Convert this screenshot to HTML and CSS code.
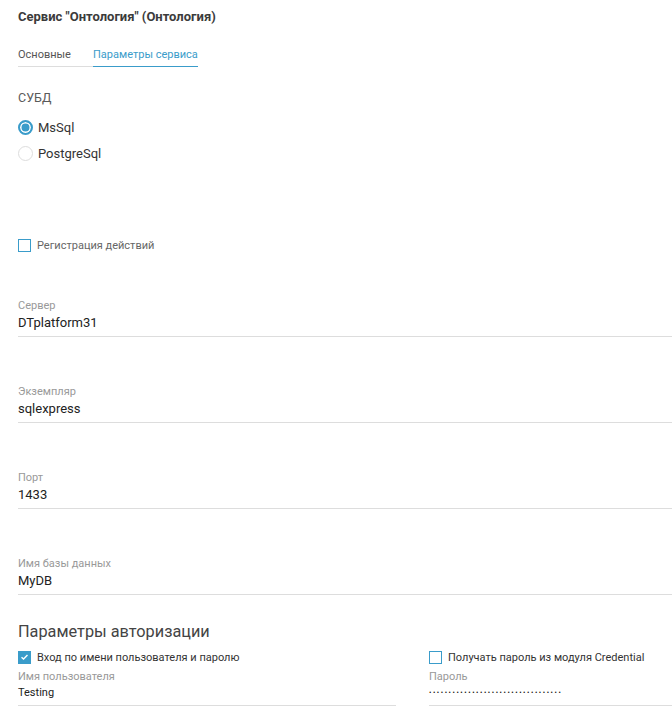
FILE: index.html
```html
<!DOCTYPE html>
<html lang="ru">
<head>
    <meta charset="UTF-8">
    <meta name="viewport" content="width=device-width, initial-scale=1.0">
    <title>Сервис "Онтология"</title>
    <link rel="stylesheet" href="styles.css">
</head>
<body>
    <div class="page">
        <h1 class="title">Сервис "Онтология" (Онтология)</h1>

        <div class="tabs">
            <span class="tab">Основные</span>
            <span class="tab active">Параметры сервиса</span>
        </div>

        <div class="group-label">СУБД</div>
        <div class="radios">
            <div class="radio-row">
                <span class="radio checked"></span>
                <span>MsSql</span>
            </div>
            <div class="radio-row">
                <span class="radio"></span>
                <span>PostgreSql</span>
            </div>
        </div>

        <div class="check-row log">
            <span class="checkbox"></span>
            <span>Регистрация действий</span>
        </div>

        <div class="field">
            <div class="field-label">Сервер</div>
            <div class="field-value">DTplatform31</div>
        </div>
        <div class="field">
            <div class="field-label">Экземпляр</div>
            <div class="field-value">sqlexpress</div>
        </div>
        <div class="field">
            <div class="field-label">Порт</div>
            <div class="field-value">1433</div>
        </div>
        <div class="field">
            <div class="field-label">Имя базы данных</div>
            <div class="field-value">MyDB</div>
        </div>

        <h2 class="subtitle">Параметры авторизации</h2>
        <div class="auth">
            <div class="auth-col">
                <div class="check-row dark">
                    <span class="checkbox checked">
                        <svg viewBox="0 0 14 14" width="14" height="14"><path d="M3.2 7.2 L5.8 9.6 L10.8 4.6" fill="none" stroke="#fff" stroke-width="1.8"/></svg>
                    </span>
                    <span>Вход по имени пользователя и паролю</span>
                </div>
                <div class="small-field">
                    <div class="field-label">Имя пользователя</div>
                    <div class="small-value">Testing</div>
                </div>
            </div>
            <div class="auth-col">
                <div class="check-row dark">
                    <span class="checkbox"></span>
                    <span>Получать пароль из модуля Credential</span>
                </div>
                <div class="small-field">
                    <div class="field-label">Пароль</div>
                    <div class="small-value dots">••••••••••••••••••••••••••••••••••</div>
                </div>
            </div>
        </div>
    </div>
</body>
</html>
```

FILE: styles.css
```css
* {
    box-sizing: border-box;
}
body {
    margin: 0;
    background: #fff;
    font-family: Roboto, "Liberation Sans", sans-serif;
    color: #333;
    overflow: hidden;
}
.page {
    padding: 9px 0 0 18px;
}
.title {
    margin: 0;
    font-size: 13px;
    line-height: 16px;
    font-weight: bold;
    color: #3b3b3b;
}
.tabs {
    display: flex;
    margin-top: 22px;
}
.tab {
    font-size: 11px;
    line-height: 16px;
    padding-bottom: 3px;
    color: #555;
    border-bottom: 1px solid #ddd;
    width: 75px;
}
.tab.active {
    width: auto;
    color: #3a9cca;
    border-bottom: 1px solid #3a9cca;
}
.group-label {
    margin-top: 21px;
    font-size: 12.5px;
    line-height: 20px;
    color: #5a5a5a;
}
.radios {
    margin-top: 6px;
}
.radio-row {
    display: flex;
    align-items: center;
    height: 26px;
    font-size: 13px;
    color: #333;
}
.radio {
    width: 15px;
    height: 15px;
    border-radius: 50%;
    border: 1px solid #ddd;
    margin-right: 5px;
}
.radio.checked {
    border: 2px solid #3a9cca;
    background: #3a9cca;
    box-shadow: inset 0 0 0 1.5px #fff;
}
.check-row {
    display: flex;
    align-items: center;
    font-size: 11px;
    color: #666;
}
.check-row.log {
    margin-top: 69px;
    height: 20px;
}
.checkbox {
    width: 13px;
    height: 13px;
    border: 1px solid #3a9cca;
    margin-right: 6px;
    display: flex;
    align-items: center;
    justify-content: center;
}
.checkbox.checked {
    background: #3a9cca;
}
.field {
    margin-top: 44px;
    border-bottom: 1px solid #ddd;
    padding-bottom: 3px;
}
.field + .field {
    margin-top: 48px;
}
.field-label {
    font-size: 11px;
    line-height: 14px;
    color: #999;
}
.field-value {
    font-size: 13px;
    line-height: 20px;
    color: #222;
}
.subtitle {
    margin: 25px 0 0;
    font-size: 16.3px;
    line-height: 24px;
    font-weight: normal;
    color: #444;
}
.auth {
    display: grid;
    grid-template-columns: 378px 1fr;
    column-gap: 33px;
    margin-top: 4px;
}
.check-row.dark {
    color: #333;
    height: 18px;
}
.small-field {
    margin-top: 4px;
    border-bottom: 1px solid #ddd;
    padding-bottom: 4px;
}
.small-value {
    font-size: 11px;
    line-height: 16px;
    color: #222;
    margin-top: 1px;
}
.dots {
    font-size: 7px;
    letter-spacing: 1.56px;
    color: #111;
}
```
